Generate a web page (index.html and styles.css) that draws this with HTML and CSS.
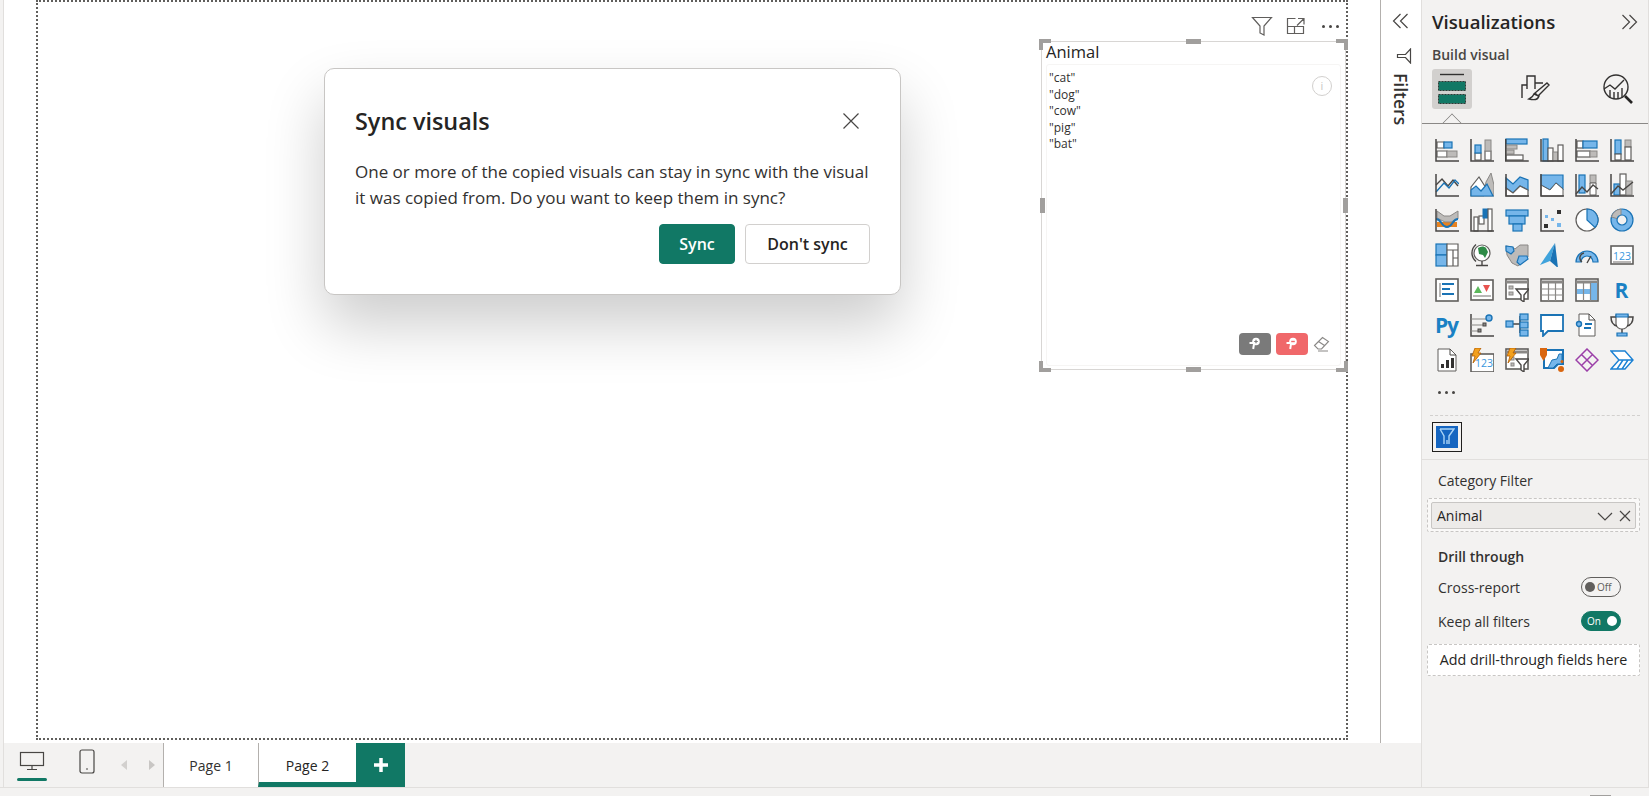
FILE: index.html
```html
<!DOCTYPE html>
<html lang="en">

<head>
    <meta charset="UTF-8">
    <meta name="viewport" content="width=device-width, initial-scale=1.0">
    <title>Sync visuals</title>
    <link rel="stylesheet" href="styles.css">
</head>

<body>
    <div class="app">
        <div class="report">
            <div class="report-top">
                <div class="canvas">
                    <div class="page">
                        <div class="visual-tools">
                            <svg width="22" height="22" viewBox="0 0 22 22"><path class="tool" d="M1.500 2.500h19l-7.500 8.500v9l-4-2v-7z"/></svg>
                            <svg width="20" height="20" viewBox="0 0 20 20"><path class="tool" d="M9.500 2.500h-8v15h16v-7h-16M8.500 10.500v7M12 2.500h6v6M18 2.500l-7 7"/></svg>
                            <div class="more-dots"><span></span><span></span><span></span></div>
                        </div>

                        <div class="visual">
                            <div class="visual-title">Animal</div>
                            <div class="visual-body">
                                <div>"cat"</div>
                                <div>"dog"</div>
                                <div>"cow"</div>
                                <div>"pig"</div>
                                <div>"bat"</div>
                                <div class="info-mark">i</div>
                            </div>
                            <div class="visual-actions">
                                <div class="pin-btn pin-gray"><svg width="14" height="14" viewBox="0 0 14 14"><path class="pin" d="M1.500 6h7M6 7l-.8 5"/><circle class="pin-dot" cx="8" cy="4.500" r="3.800"/><path class="pin-mark-gray" d="M6.200 4.500h3.600M8 2.700v3.600"/></svg></div>
                                <div class="pin-btn pin-red"><svg width="14" height="14" viewBox="0 0 14 14"><path class="pin" d="M1.500 6h7M6 7l-.8 5"/><circle class="pin-dot" cx="8" cy="4.500" r="3.800"/><path class="pin-mark-red" d="M6.200 4.500h3.600"/></svg></div>
                                <svg width="18" height="18" viewBox="0 0 18 18"><path class="thin-gray" d="M1.500 10.500l8-8 6 4-7 7.500h-3.500zM5.500 6.500l6 4M5 16h10"/></svg>
                            </div>
                            <span class="handle corner-tl"></span>
                            <span class="handle corner-tr"></span>
                            <span class="handle corner-bl"></span>
                            <span class="handle corner-br"></span>
                            <span class="handle mid-t"></span>
                            <span class="handle mid-b"></span>
                            <span class="handle mid-l"></span>
                            <span class="handle mid-r"></span>
                        </div>

                        <div class="modal">
                            <div class="modal-head">
                                <h2>Sync visuals</h2>
                                <svg width="18" height="18" viewBox="0 0 18 18"><path class="thin" d="M1.500 1.500l15 15M16.500 1.500l-15 15"/></svg>
                            </div>
                            <p>One or more of the copied visuals can stay in sync with the visual it was copied from. Do you want to keep them in sync?</p>
                            <div class="modal-actions">
                                <button class="btn btn-primary">Sync</button>
                                <button class="btn">Don't sync</button>
                            </div>
                        </div>
                    </div>
                </div>

                <div class="filters-pane">
                    <svg width="18" height="18" viewBox="0 0 18 18"><path class="thin" d="M8.500 2l-7 7 7 7M15.500 2l-7 7 7 7"/></svg>
                    <svg class="filter-icon" width="16" height="16" viewBox="0 0 16 16"><path class="thin" d="M14.500 1v14l-5-5.500h-8v-3h8z"/></svg>
                    <div class="filters-label">Filters</div>
                </div>
            </div>

            <div class="tabbar">
                <div class="device device-active">
                    <svg width="26" height="20" viewBox="0 0 26 20"><rect class="thin" x="1.500" y="1.500" width="23" height="13"/><path class="thin" d="M13 15v3.500M8 18.500h10"/></svg>
                </div>
                <div class="device">
                    <svg width="16" height="25" viewBox="0 0 16 25"><rect class="thin" x="1" y="1" width="14" height="23" rx="2"/><path class="thin" d="M7 20h2"/></svg>
                </div>
                <div class="tab-arrows">
                    <span class="arrow-left"></span>
                    <span class="arrow-right"></span>
                </div>
                <div class="tab">Page 1</div>
                <div class="tab tab-active">Page 2</div>
                <div class="tab-add">
                    <svg width="14" height="14" viewBox="0 0 14 14"><path class="plus" d="M7 0v14M0 7h14"/></svg>
                </div>
            </div>
        </div>

        <div class="viz-pane">
            <div class="viz-head">
                <h3>Visualizations</h3>
                <svg width="18" height="18" viewBox="0 0 18 18"><path class="thin" d="M2.500 2l7 7-7 7M9.500 2l7 7-7 7"/></svg>
            </div>
            <div class="viz-sub">Build visual</div>

            <div class="viz-tabs">
                <div class="viz-tab viz-tab-active">
                    <svg width="34" height="34" viewBox="0 0 34 34">
                        <path class="thin-dark" d="M5 2.500h24"/>
                        <rect class="fields-block" x="3.500" y="9.500" width="27" height="9"/>
                        <rect class="fields-block" x="3.500" y="22.500" width="27" height="9"/>
                    </svg>
                </div>
                <div class="viz-tab">
                    <svg width="30" height="30" viewBox="0 0 30 30"><path class="thin-dark" d="M2 24v-13h5M7 15v-13h8v7h8M15 2v13M27 9l2 2-11 11-3-3zM14 20c-1 3-3 4-5 5 4 1 9 1 10-3z"/></svg>
                </div>
                <div class="viz-tab">
                    <svg width="32" height="32" viewBox="0 0 32 32"><circle class="thin-dark" cx="14" cy="14" r="12"/><path class="thin-dark" d="M2 16l6-4 5 4 9-9M8 17v8M12 19v7M16 19v7M20 15v10"/><path class="lens-handle" d="M23 23l7 7"/></svg>
                </div>
                <span class="viz-caret"></span>
            </div>

            <div class="icon-grid">
                <!-- row 1 -->
                <svg class="ic" viewBox="0 0 24 24"><path class="wh" d="M2 4h7v6h-7zM2 13h10v6h-10z"/><rect class="bl" x="9" y="4" width="8" height="6"/><rect class="gy" x="12" y="13" width="10" height="6"/><path class="ax" d="M1 1v22h23"/></svg>
                <svg class="ic" viewBox="0 0 24 24"><path class="wh" d="M5 15h6v7h-6zM15 13h6v9h-6z"/><rect class="bl" x="5" y="7" width="6" height="8"/><rect class="gy" x="15" y="2" width="6" height="11"/><path class="ax" d="M1 1v22h23"/></svg>
                <svg class="ic" viewBox="0 0 24 24"><rect class="bl" x="1" y="1" width="21" height="5"/><rect class="gy" x="1" y="7" width="11" height="4"/><rect class="gy" x="1" y="12" width="8" height="4"/><rect class="wh" x="1" y="17" width="17" height="5"/><path class="ax" d="M.75 1v22h23"/></svg>
                <svg class="ic" viewBox="0 0 24 24"><rect class="bl" x="3" y="1" width="5" height="22"/><rect class="wh" x="8" y="10" width="5" height="13"/><rect class="gy" x="13" y="14" width="5" height="9"/><rect class="wh" x="18" y="7" width="5" height="16"/><path class="ax" d="M1 1v22h23"/></svg>
                <svg class="ic" viewBox="0 0 24 24"><rect class="wh" x="2" y="3" width="6" height="7"/><rect class="bl" x="8" y="3" width="14" height="7"/><rect class="wh" x="2" y="13" width="13" height="6"/><rect class="gy" x="15" y="13" width="7" height="6"/><path class="ax" d="M1 1v22h23"/></svg>
                <svg class="ic" viewBox="0 0 24 24"><rect class="bl" x="5" y="2" width="6" height="14"/><rect class="wh" x="5" y="16" width="6" height="6"/><rect class="gy" x="15" y="2" width="6" height="7"/><rect class="wh" x="15" y="9" width="6" height="13"/><path class="ax" d="M1 1v22h23"/></svg>
                <!-- row 2 -->
                <svg class="ic" viewBox="0 0 24 24"><path class="ln-d" d="M1 12l6-6 6 7 5-6 5 6"/><path class="ln-b" d="M1 19l8-9 5 5 6-8 4 4"/><path class="ax" d="M1 1v22h23"/></svg>
                <svg class="ic" viewBox="0 0 24 24"><path class="gy" d="M13 23l3-14 5-9 3 12v11z"/><path class="wh" d="M1 14l8-10 7 11-3 8h-12z"/><path class="bl" d="M1 23v-6l5-4 5 5 6-7 6 12z"/></svg>
                <svg class="ic" viewBox="0 0 24 24"><path class="bl" d="M1 5l7 6 7-7 8 3v10l-8-4-7 7-7-5z"/><path class="wh" d="M1 15l7 5 7-7 8 4v6h-22z"/><path class="ax" d="M1 1v22h23"/></svg>
                <svg class="ic" viewBox="0 0 24 24"><path class="bl" d="M1 2h22v14l-7-6-6 7-9-5z"/><path class="wh-thin" d="M1 12l9 5 6-7 7 6v7h-22z"/><path class="ax" d="M1 1v22h23"/></svg>
                <svg class="ic" viewBox="0 0 24 24"><rect class="bl" x="4" y="2" width="6" height="18"/><rect class="gy" x="15" y="2" width="6" height="8"/><path class="wh-thin" d="M15 10h6v12h-6z"/><path class="ln-d" d="M1 21l6-7 5 5 6-7 5 4"/><path class="ax" d="M1 1v22h23"/></svg>
                <svg class="ic" viewBox="0 0 24 24"><rect class="bl" x="4" y="11" width="6" height="11"/><rect class="wh" x="10" y="1" width="6" height="21"/><rect class="gy" x="16" y="8" width="6" height="14"/><path class="ln-d" d="M1 21l7-8 5 4 10-8"/><path class="ax" d="M1 1v22h23"/></svg>
                <!-- row 3 -->
                <svg class="ic" viewBox="0 0 24 24"><path class="or" d="M2 14h20v5h-20z"/><path class="gy" d="M2 3l7 5 6 0 8-5v8l-7 3h-6l-8-4z"/><path class="ln-b2" d="M1 11c6 0 5 8 11 8s5-8 11-8"/><path class="ax" d="M1 1v22h23"/></svg>
                <svg class="ic" viewBox="0 0 24 24"><rect class="wh" x="4" y="9" width="4" height="14"/><rect class="wh" x="9" y="8" width="5" height="8"/><rect class="bl-dark" x="13" y="1" width="5" height="9"/><rect class="wh" x="18" y="1" width="4" height="22"/><path class="ax" d="M1 1v22h23"/></svg>
                <svg class="ic" viewBox="0 0 24 24"><rect class="bl" x="1" y="2" width="22" height="6"/><rect class="bl" x="4" y="8" width="16" height="8"/><rect class="bl" x="8" y="16" width="9" height="7"/></svg>
                <svg class="ic" viewBox="0 0 24 24"><rect class="sq-blue" x="5" y="7" width="3" height="3"/><rect class="sq-blue" x="11" y="10" width="3" height="3"/><rect class="sq-blue" x="17" y="15" width="4" height="4"/><rect class="sq-dark" x="17" y="2" width="4" height="4"/><rect class="sq-dark" x="4" y="16" width="4" height="4"/><path class="ax" d="M1 1v22h23"/></svg>
                <svg class="ic" viewBox="0 0 24 24"><circle class="wh" cx="12" cy="12" r="11"/><path class="bl" d="M12 12v-11a11 11 0 0 1 8 18.500z"/></svg>
                <svg class="ic" viewBox="0 0 24 24"><circle class="bl" cx="12" cy="12" r="11"/><path class="gy" d="M1.500 9a11 11 0 0 1 9.500-7.900v6a5 5 0 0 0-4 3.500z"/><circle class="donut-hole" cx="12" cy="12" r="5"/></svg>
                <!-- row 4 -->
                <svg class="ic" viewBox="0 0 24 24"><rect class="bl" x="1" y="1" width="11" height="11"/><rect class="bl" x="1" y="12" width="11" height="11"/><path class="wh" d="M12 1h11v6h-11zM12 7h6v16h-6zM18 7h5v8h-5zM18 15h5v8h-5z"/></svg>
                <svg class="ic" viewBox="0 0 24 24"><circle class="wh" cx="12" cy="10" r="8"/><path class="gr" d="M8 5c3-2 6-2 8 0l2 4-3 6-2-3-4-1z"/><path class="ln-d" d="M6 1.500a11 11 0 0 0 0 17M12 18v4M6 22.500h12"/></svg>
                <svg class="ic" viewBox="0 0 24 24"><path class="gy" d="M1 3l6 1 3 2 5-4 8 0v12l-10 9-6-3-5-8z"/><path class="bl" d="M1 3l7 1 1 4-3 3-5-3zM22 13l-8 0-2 6 3 3 8-6z"/></svg>
                <svg class="ic" viewBox="0 0 24 24"><path class="nav-a" d="M15 0l-15 22 10-4z"/><path class="nav-b" d="M15 0l-5 18 8 7z"/></svg>
                <svg class="ic" viewBox="0 0 24 24"><path class="gauge" d="M1 19a11 11 0 0 1 22 0h-5a6 6 0 0 0-12 0z"/><path class="ln-d" d="M7 19a5 5 0 0 1 2-9M12 20l4-7"/></svg>
                <svg class="ic" viewBox="0 0 24 24"><rect class="frame" x="1" y="3" width="22" height="18"/><text class="num" x="12" y="16.500">123</text><path class="ln-g" d="M3 19h18"/></svg>
                <!-- row 5 -->
                <svg class="ic" viewBox="0 0 24 24"><rect class="frame" x="1" y="1" width="22" height="22"/><path class="ln-g" d="M5 5v14"/><path class="ln-b2" d="M7 6h12M7 11h8M7 16h12"/></svg>
                <svg class="ic" viewBox="0 0 24 24"><rect class="frame" x="1" y="2" width="22" height="20"/><path class="tri-g" d="M4 15l4-7 4 7z"/><path class="tri-r" d="M13 7h7l-3.500 7z"/><path class="ln-g" d="M3 18h18"/></svg>
                <svg class="ic" viewBox="0 0 24 24"><rect class="frame" x="1" y="1" width="22" height="20"/><path class="ln-g2" d="M1 4h22"/><rect class="gy" x="4" y="8" width="4" height="3"/><rect class="gy" x="4" y="14" width="4" height="3"/><path class="funnel" d="M11 11h13l-5 6v7l-3-2v-5z"/></svg>
                <svg class="ic" viewBox="0 0 24 24"><rect class="frame" x="1" y="1" width="22" height="22"/><path class="ln-g2" d="M1 4h22"/><path class="ln-g" d="M1 11h22M1 17h22M8.500 4v19M15.500 4v19"/></svg>
                <svg class="ic" viewBox="0 0 24 24"><rect class="frame" x="1" y="1" width="22" height="22"/><path class="ln-g2" d="M1 4h22"/><rect class="sq-fill" x="15" y="5" width="7" height="17"/><rect class="sq-fill" x="2" y="11" width="20" height="5"/><path class="ln-g" d="M8.500 4v19M15.500 4v19"/></svg>
                <div class="letter">R</div>
                <!-- row 6 -->
                <div class="letter letter-py">Py</div>
                <svg class="ic" viewBox="0 0 24 24"><path class="ax" d="M1 1v22h23"/><path class="ln-g" d="M1 6h15M1 12h12M1 18h8"/><circle class="sq-node" cx="19" cy="5" r="3"/><rect class="sq-dark2" x="13" y="10" width="3" height="3"/><rect class="sq-dark2" x="8" y="16" width="3" height="3"/></svg>
                <svg class="ic" viewBox="0 0 24 24"><path class="ax" d="M8 11h7M15 3v17"/><rect class="bl" x="1" y="8" width="7" height="6"/><rect class="bl" x="15" y="1" width="8" height="6"/><rect class="bl" x="15" y="9" width="8" height="6"/><rect class="bl" x="15" y="17" width="8" height="6"/></svg>
                <svg class="ic" viewBox="0 0 24 24"><path class="bubble" d="M1 2h22v16h-15l-5 5v-5h-2z"/></svg>
                <svg class="ic" viewBox="0 0 24 24"><path class="wh-thin" d="M4 1h10l6 6v16h-16z"/><path class="ln-d-thin" d="M14 1v6h6"/><circle class="sq-node" cx="4" cy="11" r="2.500"/><path class="ln-b2" d="M10 11h7M9 15h7"/></svg>
                <svg class="ic" viewBox="0 0 24 24"><path class="wh" d="M6 2h12v9c0 3-3 5-6 5s-6-2-6-5z"/><path class="ax" d="M6 4h-5c0 5 2 8 6 9M18 4h5c0 5-2 8-6 9M12 16v4"/><path class="bl" d="M6 1h12v3h-12zM7 20h10v3h-10z"/></svg>
                <!-- row 7 -->
                <svg class="ic" viewBox="0 0 24 24"><path class="wh-thin" d="M3 1h12l6 6v16h-18z"/><path class="ln-d-thin" d="M15 1v6h6"/><path class="bars" d="M6 20v-4h3v4zM11 20v-8h3v8zM16 20v-10h3v10z"/></svg>
                <svg class="ic" viewBox="0 0 24 24"><rect class="frame" x="1" y="6" width="23" height="18"/><text class="num" x="14" y="19">123</text><path class="bolt" d="M5 0h6l-3 5h3l-8 10 2-7h-3z"/></svg>
                <svg class="ic" viewBox="0 0 24 24"><rect class="frame" x="1" y="1" width="22" height="20"/><path class="ln-g2" d="M1 4h22"/><rect class="gy" x="6" y="9" width="3" height="3"/><rect class="gy" x="6" y="15" width="3" height="3"/><path class="funnel" d="M11 11h13l-5 6v7l-3-2v-5z"/><path class="bolt" d="M5 0h6l-3 5h3l-8 10 2-7h-3z"/></svg>
                <svg class="ic" viewBox="0 0 24 24"><path class="frame-blue" d="M4 2h19v14h-5l-4 4h-10z"/><path class="map-fill" d="M8 20l4-8 5-1 2-5 3 0v10h-5l-4 4z"/><path class="pin-or" d="M0 0h7v7l-3.500 6-3.500-6z"/><circle class="dot-or" cx="21" cy="21" r="3"/><circle class="dot-or" cx="22" cy="13.500" r="1.500"/></svg>
                <svg class="ic" viewBox="0 0 24 24"><path class="diamond" d="M12 1l11 11-11 11-11-11zM6.500 6.500l11 11M17.500 6.500l-11 11"/></svg>
                <svg class="ic" viewBox="0 0 24 24"><path class="flow" d="M1 3h14l8 9-8 9h-14l8-9zM9 12h14M13 12l-6 9M18 12l-6 9"/></svg>
            </div>

            <div class="more-viz">
                <span></span><span></span><span></span>
            </div>
            <div class="dash-line"></div>

            <div class="selected-wrap">
                <div class="selected-icon">
                    <svg width="16" height="18" viewBox="0 0 16 18"><path class="sel-funnel" d="M1 1h14l-5 7v8M5 16v-8l-4-7M8 12v4"/></svg>
                </div>
            </div>

            <div class="field-section">
                <div class="field-label">Category Filter</div>
                <div class="field-well">
                    <div class="field-pill">
                        <span>Animal</span>
                        <svg width="16" height="16" viewBox="0 0 16 16"><path class="thin" d="M1 5l7 7 7-7"/></svg>
                        <svg class="field-close" width="12" height="12" viewBox="0 0 12 12"><path class="thin" d="M1 1l10 10M11 1l-10 10"/></svg>
                    </div>
                </div>

                <div class="drill-title">Drill through</div>
                <div class="toggle-row">
                    <span>Cross-report</span>
                    <div class="toggle"><i></i><span>Off</span></div>
                </div>
                <div class="toggle-row">
                    <span>Keep all filters</span>
                    <div class="toggle toggle-on"><span>On</span><i></i></div>
                </div>
                <div class="drill-well">Add drill-through fields here</div>
            </div>
        </div>
    </div>

    <div class="statusbar"><span></span></div>
</body>

</html>
```
FILE: styles.css
```css
* {
    margin: 0;
    padding: 0;
    box-sizing: border-box;
    font-family: 'Open Sans', 'Noto Sans', sans-serif;
}

body {
    background-color: #f3f2f1;
    color: #252423;
    width: 1649px;
    height: 796px;
    overflow: hidden;
}

.app {
    display: flex;
    height: 787px;
}

/* report area */
.report {
    width: 1418px;
    margin-left: 3px;
    border-left: 1px solid #e1dfdd;
    display: flex;
    flex-direction: column;
}

.report-top {
    height: 743px;
    flex: none;
    display: flex;
    background-color: white;
}

.canvas {
    flex: 1;
    padding: 0 32px 3px 32px;
}

.page {
    position: relative;
    height: 100%;
    border: 2px dotted #605e5c;
}

.thin {
    fill: none;
    stroke: #484644;
    stroke-width: 1.2;
}

.thin-dark {
    fill: none;
    stroke: #323130;
    stroke-width: 1.4;
}

.thin-gray {
    fill: none;
    stroke: #8a8886;
    stroke-width: 1.1;
}

.tool {
    fill: none;
    stroke: #605e5c;
    stroke-width: 1.2;
}

.visual-tools {
    position: absolute;
    left: 1213px;
    top: 13px;
    display: flex;
    align-items: center;
    gap: 13px;
}

.more-dots {
    display: flex;
    gap: 4px;
    margin-left: 3px;
}

.more-dots span {
    width: 3px;
    height: 3px;
    border-radius: 50%;
    background-color: #484644;
}

.visual {
    position: absolute;
    left: 1003px;
    top: 39px;
    width: 305px;
    height: 329px;
    border: 1px solid #d8d6d4;
    background-color: white;
    display: flex;
    flex-direction: column;
    padding: 0 4px;
}

.visual-title {
    height: 22px;
    line-height: 19px;
    font-size: 16.5px;
}

.visual-body {
    position: relative;
    flex: 1;
    border: 1px solid #f6f5f4;
    border-radius: 3px;
    margin-bottom: 3px;
    padding: 5px 0 0 2px;
    font-size: 12px;
    line-height: 16.5px;
    color: #323130;
}

.info-mark {
    position: absolute;
    right: 8px;
    top: 11px;
    width: 20px;
    height: 20px;
    border: 1.5px solid #d2d0ce;
    border-radius: 50%;
    text-align: center;
    line-height: 17px;
    font-size: 11px;
    color: #c8c6c4;
}

.visual-actions {
    position: absolute;
    right: 14px;
    bottom: 14px;
    display: flex;
    align-items: center;
    gap: 5px;
}

.pin-btn {
    width: 32px;
    height: 22px;
    border-radius: 4px;
    display: flex;
    align-items: center;
    justify-content: center;
}

.pin-gray {
    background-color: #7a7a7a;
}

.pin-red {
    background-color: #f0686a;
}

.pin {
    fill: none;
    stroke: white;
    stroke-width: 2;
}

.pin-dot {
    fill: white;
}

.pin-mark-gray {
    fill: none;
    stroke: #7a7a7a;
    stroke-width: 1.2;
}

.pin-mark-red {
    fill: none;
    stroke: #f0686a;
    stroke-width: 1.4;
}

.handle {
    position: absolute;
    background-color: #a19f9d;
}

.corner-tl,
.corner-tr,
.corner-bl,
.corner-br {
    width: 12px;
    height: 11px;
    background-color: transparent;
    border: 0 solid #a19f9d;
}

.corner-tl {
    left: -3px;
    top: -3px;
    border-width: 4px 0 0 4px;
}

.corner-tr {
    right: -3px;
    top: -3px;
    border-width: 4px 4px 0 0;
}

.corner-bl {
    left: -3px;
    bottom: -3px;
    border-width: 0 0 4px 4px;
}

.corner-br {
    right: -3px;
    bottom: -3px;
    border-width: 0 4px 4px 0;
}

.mid-t,
.mid-b {
    left: 144px;
    width: 15px;
    height: 5px;
}

.mid-t {
    top: -3px;
}

.mid-b {
    bottom: -3px;
}

.mid-l,
.mid-r {
    top: 156px;
    width: 5px;
    height: 15px;
}

.mid-l {
    left: -2px;
}

.mid-r {
    right: -3px;
}

/* dialog */
.modal {
    position: absolute;
    left: 286px;
    top: 66px;
    width: 577px;
    height: 227px;
    background-color: white;
    border-radius: 10px;
    border: 1px solid #c8c6c4;
    box-shadow: 0 30px 60px rgba(0, 0, 0, 0.2);
    padding: 32px 30px 0 30px;
}

.modal-head {
    display: flex;
    justify-content: space-between;
    align-items: center;
    height: 40px;
    padding-right: 10px;
}

.modal-head h2 {
    font-size: 23.4px;
    font-weight: 600;
}

.modal p {
    margin-top: 18px;
    font-size: 17px;
    line-height: 26px;
    width: 520px;
    color: #323130;
}

.modal-actions {
    display: flex;
    justify-content: flex-end;
    gap: 10px;
    margin-top: 13px;
}

.btn {
    height: 40px;
    width: 125px;
    background-color: white;
    border: 1px solid #d2d0ce;
    border-radius: 4px;
    font-size: 16px;
    font-weight: 600;
    color: #252423;
}

.btn-primary {
    width: 76px;
    background-color: #117865;
    border-color: #117865;
    color: white;
}

/* filters pane */
.filters-pane {
    width: 41px;
    border-left: 1px solid #b3b0ad;
    display: flex;
    flex-direction: column;
    align-items: center;
    padding-top: 12px;
}

.filter-icon {
    margin-top: 18px;
    margin-left: 6px;
}

.filters-label {
    writing-mode: vertical-rl;
    margin-top: 9px;
    font-size: 17.5px;
    font-weight: 600;
    color: #323130;
}

/* bottom tabs */
.tabbar {
    height: 44px;
    flex: none;
    display: flex;
    align-items: stretch;
}

.device {
    width: 30px;
    margin-left: 13px;
    padding-bottom: 8px;
    display: flex;
    align-items: center;
    justify-content: center;
}

.device + .device {
    margin-left: 25px;
}

.device-active {
    position: relative;
}

.device-active::after {
    content: '';
    position: absolute;
    left: 0;
    right: 0;
    bottom: 6px;
    height: 3px;
    border-radius: 2px;
    background-color: #117865;
}

.tab-arrows {
    width: 61px;
    display: flex;
    align-items: center;
    justify-content: space-between;
    padding: 0 8px 0 19px;
}

.arrow-left,
.arrow-right {
    width: 0;
    height: 0;
    border-top: 5px solid transparent;
    border-bottom: 5px solid transparent;
}

.arrow-left {
    border-right: 6px solid #d2d0ce;
}

.arrow-right {
    border-left: 6px solid #c8c6c4;
}

.tab {
    width: 95px;
    background-color: white;
    border-left: 1px solid #b3b0ad;
    font-size: 14px;
    text-align: center;
    line-height: 46px;
    color: #323130;
}

.tab-active {
    width: 98px;
    color: #252423;
    border-bottom: 5px solid #117865;
}

.tab-add {
    width: 49px;
    background-color: #117865;
    display: flex;
    align-items: center;
    justify-content: center;
}

.plus {
    stroke: white;
    stroke-width: 3.5;
}

/* visualizations pane */
.viz-pane {
    width: 228px;
    border-left: 1px solid #e1dfdd;
    border-right: 1px solid #e1dfdd;
    display: flex;
    flex-direction: column;
}

.viz-head {
    height: 44px;
    padding: 0 10px;
    display: flex;
    justify-content: space-between;
    align-items: center;
}

.viz-head h3 {
    font-size: 18.6px;
    font-weight: 600;
    margin-bottom: 2px;
}

.viz-sub {
    height: 22px;
    padding-left: 10px;
    line-height: 22px;
    font-size: 14px;
    font-weight: 600;
    color: #484644;
}

.viz-tabs {
    position: relative;
    display: flex;
    height: 58px;
    padding: 3px 10px 0 10px;
    justify-content: space-between;
    border-bottom: 1px solid #8a8886;
}

.viz-tab {
    width: 40px;
    height: 40px;
    display: flex;
    align-items: center;
    justify-content: center;
    border-radius: 3px;
}

.viz-tab-active {
    background-color: #d2d0ce;
}

.fields-block {
    fill: #117865;
    stroke: #201f1e;
    stroke-width: 0.8;
    stroke-dasharray: 2 1;
}

.lens-handle {
    fill: none;
    stroke: #252423;
    stroke-width: 2.6;
}

.viz-caret {
    position: absolute;
    left: 23px;
    bottom: -7px;
    width: 14px;
    height: 14px;
    background-color: #f3f2f1;
    border-left: 1px solid #8a8886;
    border-top: 1px solid #8a8886;
    transform: rotate(45deg);
    clip-path: polygon(0 0, 100% 0, 0 100%);
}

.icon-grid {
    display: grid;
    grid-template-columns: repeat(6, 35px);
    grid-auto-rows: 35px;
    place-items: center;
    padding: 8px 0 0 7px;
}

.ic {
    width: 24px;
    height: 24px;
}

.ax {
    fill: none;
    stroke: #484644;
    stroke-width: 1.5;
}

.wh {
    fill: white;
    stroke: #605e5c;
    stroke-width: 1.2;
}

.wh-thin {
    fill: white;
    stroke: #605e5c;
    stroke-width: 1;
}

.bl {
    fill: #76b6ea;
    stroke: #1a73b5;
    stroke-width: 1.2;
}

.bl-dark {
    fill: #1a73b5;
    stroke: #1a73b5;
}

.gy {
    fill: #bdbbb9;
    stroke: #8a8886;
    stroke-width: 1;
}

.ln-d {
    fill: none;
    stroke: #484644;
    stroke-width: 1.4;
}

.ln-d-thin {
    fill: none;
    stroke: #484644;
    stroke-width: 1;
}

.ln-b {
    fill: none;
    stroke: #1a73b5;
    stroke-width: 1.4;
}

.ln-b2 {
    fill: none;
    stroke: #1a73b5;
    stroke-width: 2;
}

.ln-g {
    fill: none;
    stroke: #8a8886;
    stroke-width: 1.2;
}

.ln-g2 {
    fill: none;
    stroke: #8a8886;
    stroke-width: 3;
}

.or {
    fill: #e8821e;
}

.gr {
    fill: #2e8b47;
}

.sq-blue {
    fill: #76b6ea;
}

.sq-dark {
    fill: #323130;
}

.sq-dark2 {
    fill: #8a8886;
    stroke: #484644;
}

.sq-fill {
    fill: #76b6ea;
}

.sq-node {
    fill: #76b6ea;
    stroke: #1a73b5;
    stroke-width: 1.4;
}

.donut-hole {
    fill: #f3f2f1;
    stroke: #1a73b5;
    stroke-width: 1.2;
}

.nav-a {
    fill: #3fa3dc;
}

.nav-b {
    fill: #1a73b5;
}

.gauge {
    fill: #76b6ea;
    stroke: #1a73b5;
    stroke-width: 1.2;
}

.frame {
    fill: white;
    stroke: #605e5c;
    stroke-width: 1.6;
}

.frame-blue {
    fill: white;
    stroke: #1a73b5;
    stroke-width: 2;
}

.map-fill {
    fill: #76b6ea;
    stroke: #1a73b5;
}

.pin-or,
.dot-or {
    fill: #d9660f;
}

.num {
    font-size: 10.5px;
    fill: #3a96dd;
    text-anchor: middle;
}

.letter {
    width: 24px;
    height: 24px;
    line-height: 24px;
    text-align: center;
    font-size: 21px;
    font-weight: 700;
    color: #1a81c4;
}

.letter-py {
    width: 28px;
    letter-spacing: -1px;
}

.tri-g {
    fill: #5cb85c;
}

.tri-r {
    fill: #e8534f;
}

.funnel {
    fill: white;
    stroke: #484644;
    stroke-width: 1.4;
}

.bubble {
    fill: white;
    stroke: #1a73b5;
    stroke-width: 1.8;
}

.bars {
    fill: #323130;
}

.bolt {
    fill: #f2a01e;
    stroke: #b35c00;
    stroke-width: 0.8;
}

.diamond {
    fill: none;
    stroke: #9b3fa8;
    stroke-width: 1.5;
}

.flow {
    fill: white;
    stroke: #1a81d4;
    stroke-width: 1.4;
}

.more-viz {
    height: 38px;
    padding: 14px 0 0 16px;
    display: flex;
    gap: 4px;
}

.more-viz span {
    width: 3px;
    height: 3px;
    border-radius: 50%;
    background-color: #484644;
}

.dash-line {
    margin: 0 8px;
    border-top: 1px dashed #d2d0ce;
}

.selected-wrap {
    height: 44px;
    padding: 6px 0 0 10px;
    border-bottom: 1px solid #e1dfdd;
}

.selected-icon {
    width: 30px;
    height: 30px;
    border: 1px solid #201f1e;
    padding: 3px;
    display: flex;
    align-items: center;
    justify-content: center;
    background-color: #1565c0;
    background-clip: content-box;
}

.sel-funnel {
    fill: none;
    stroke: #a9d3f5;
    stroke-width: 1.4;
}

.field-section {
    padding: 0 8px 0 5px;
}

.field-label {
    height: 38px;
    padding: 11px 0 0 11px;
    font-size: 14px;
    color: #323130;
}

.field-well {
    height: 34px;
    padding: 3px 3px;
    border: 1px dashed #c8c6c4;
    background-color: #faf9f8;
    border-radius: 2px;
}

.field-pill {
    height: 27px;
    padding: 0 4px 0 5px;
    display: flex;
    align-items: center;
    background-color: #edebe9;
    border: 1px solid #c8c6c4;
    border-radius: 2px;
    font-size: 14px;
}

.field-pill span {
    flex: 1;
}

.field-close {
    margin-left: 6px;
}

.drill-title {
    height: 25px;
    margin-top: 13px;
    padding-left: 11px;
    line-height: 24px;
    font-size: 14px;
    font-weight: 600;
    color: #323130;
}

.toggle-row {
    height: 34px;
    padding: 0 19px 0 11px;
    display: flex;
    align-items: center;
    justify-content: space-between;
    font-size: 14px;
    color: #323130;
}

.toggle {
    width: 40px;
    height: 20px;
    border: 1px solid #605e5c;
    border-radius: 10px;
    display: flex;
    align-items: center;
    gap: 2px;
    padding: 0 3px;
    font-size: 10px;
    color: #605e5c;
}

.toggle i {
    width: 10px;
    height: 10px;
    border-radius: 50%;
    background-color: #605e5c;
}

.toggle-on {
    justify-content: space-between;
    background-color: #117865;
    border-color: #117865;
    color: white;
    padding: 0 3px 0 5px;
}

.toggle-on i {
    background-color: white;
}

.drill-well {
    height: 32px;
    margin-top: 6px;
    line-height: 30px;
    text-align: center;
    font-size: 14.3px;
    background-color: white;
    border: 1px dashed #c8c6c4;
    border-radius: 2px;
}

/* status bar */
.statusbar {
    height: 9px;
    border-top: 1px solid #e1dfdd;
    display: flex;
    justify-content: flex-end;
    align-items: flex-end;
    padding-right: 38px;
}

.statusbar span {
    width: 21px;
    height: 1px;
    background-color: #a19f9d;
}
```
